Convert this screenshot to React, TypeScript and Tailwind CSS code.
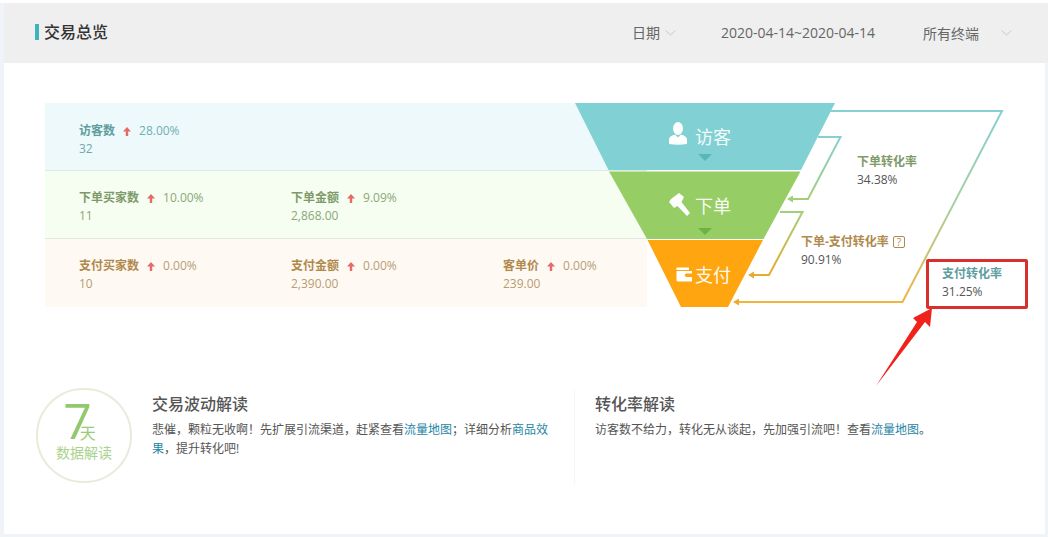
const font = { fontFamily: '"Open Sans","Noto Sans CJK SC",sans-serif' };

function UpArrow() {
  return (
    <svg width="8" height="9" viewBox="0 0 8 9" className="mx-2 shrink-0">
      <path d="M4 0 L8 4.5 L5.2 4.5 L5.2 9 L2.8 9 L2.8 4.5 L0 4.5 Z" fill="#e56a68" />
    </svg>
  );
}

function Chevron() {
  return (
    <svg width="11" height="6" viewBox="0 0 11 6" fill="none">
      <path d="M0.5 0.5 L5.5 5 L10.5 0.5" stroke="#c6c9c9" strokeWidth="1" />
    </svg>
  );
}

function Metric({ label, pct, value, labelCls, pctCls, valCls }: { label: string; pct: string; value: string; labelCls: string; pctCls: string; valCls: string }) {
  return (
    <div className="w-[212px] shrink-0">
      <div className="flex items-center h-[18px] text-xs">
        <span className={`font-bold ${labelCls}`}>{label}</span>
        <UpArrow />
        <span className={pctCls}>{pct}</span>
      </div>
      <div className={`h-[18px] leading-[18px] text-xs ${valCls}`}>{value}</div>
    </div>
  );
}

function Diagram() {
  return (
    <svg className="absolute left-0 top-0 overflow-visible" width="1003" height="290" viewBox="45 103 1003 290" fill="none">
      <defs>
        <linearGradient id="g1" gradientUnits="userSpaceOnUse" x1="0" y1="111" x2="0" y2="302">
          <stop offset="0" stopColor="#86d0d3" />
          <stop offset="0.5" stopColor="#a9d0a0" />
          <stop offset="1" stopColor="#f0b43f" />
        </linearGradient>
        <linearGradient id="g2" gradientUnits="userSpaceOnUse" x1="0" y1="137" x2="0" y2="199">
          <stop offset="0" stopColor="#86d0d3" />
          <stop offset="1" stopColor="#a3cf78" />
        </linearGradient>
        <linearGradient id="g3" gradientUnits="userSpaceOnUse" x1="0" y1="212" x2="0" y2="275">
          <stop offset="0" stopColor="#a3cf78" />
          <stop offset="1" stopColor="#eaaa30" />
        </linearGradient>
      </defs>
      <polygon points="575,103 835,103 801,170 608.5,170" fill="#81d0d3" />
      <polygon points="609,171.5 800.5,171.5 763.5,239 647,239" fill="#96cd64" />
      <polygon points="647.5,240 763,240 728,307 681,307" fill="#fea50f" />
      <polygon points="698,154 712,154 705,161" fill="#5cb6b9" />
      <polygon points="698,228 712,228 705,235" fill="#6fb04a" />
      <path d="M830 111 H1002 L902.5 302 H738" stroke="url(#g1)" strokeWidth="2" />
      <path d="M818 137 H840.5 L808 199 H792" stroke="url(#g2)" strokeWidth="2" />
      <path d="M780 212 H802.5 L769 275 H753" stroke="url(#g3)" strokeWidth="2" />
      <polygon points="733,302 739,298.5 739,305.5" fill="#eaaa30" />
      <polygon points="787,199 793,195.5 793,202.5" fill="#a3cf78" />
      <polygon points="748,275 754,271.5 754,278.5" fill="#eaaa30" />
      <g fill="#fdfefe">
        <ellipse cx="678" cy="128.5" rx="5" ry="6.5" />
        <path d="M669 144 V139.5 C669 137 672 135.5 675 134.5 L678 137.5 L681 134.5 C684 135.5 687 137 687 139.5 V144 Q678 145.5 669 144 Z" />
        <path d="M669 202 L671 199 L679 193 L684 197 L681.5 202 L690 213 L687 216 L677.5 206 L674 208 Z" />
        <path d="M676.5 267.5 H689 V270 H676.5 Z" />
        <path d="M676.5 271 H692 V273.5 H686 Q683.5 275 686 277 H692 V281.5 H678 Q676.5 281.5 676.5 280 Z" />
      </g>
      <polygon points="876,386 917,322 913,318 932,308 930,327 925,322" fill="#f0231c" />
    </svg>
  );
}

function Rate({ label, value, labelCls, q }: { label: string; value: string; labelCls: string; q?: boolean }) {
  return (
    <>
      <div className={`flex items-center h-[18px] text-xs font-bold ${labelCls}`}>
        {label}
        {q && <span className="ml-1 w-3 h-3 border border-[#b08a4c] rounded-[2px] text-[10px] leading-[10px] font-normal text-center">?</span>}
      </div>
      <div className="h-[18px] leading-[18px] text-xs text-[#555]">{value}</div>
    </>
  );
}

export default function App() {
  return (
    <div className="w-[1048px] h-[537px] overflow-hidden bg-[#f0f3f7] flex flex-col" style={font}>
      <div className="h-[3px] bg-white shrink-0" />
      <div className="ml-1 h-[60px] shrink-0 bg-[#efefef] flex items-center pl-[31px]">
        <div className="w-1 h-4 bg-[#3cb6bc] mr-[5px] mb-[2px]" />
        <div className="text-base font-medium text-[#333] mb-[2px]">交易总览</div>
        <div className="ml-auto flex items-center text-[#666] text-sm">
          <span>日期</span>
          <span className="ml-[5px] mr-[45px]"><Chevron /></span>
          <span className="mr-[48px]">2020-04-14~2020-04-14</span>
          <span className="pt-[1px]">所有终端</span>
          <span className="ml-[22px] mr-[36px]"><Chevron /></span>
        </div>
      </div>
      <div className="ml-1 mr-[3px] flex-1 bg-white flex flex-col">
        <div className="relative ml-[41px] mt-10 w-[1003px] h-[204px]">
          <div className="w-[602px] flex flex-col">
            <div className="h-[68px] bg-[#eef9fb] border-b border-[#dce9e7] pl-[34px] pt-[19px] flex">
              <Metric label="访客数" pct="28.00%" value="32" labelCls="text-[#5f9ea0]" pctCls="text-[#6fb0b5]" valCls="text-[#6fa8b0]" />
            </div>
            <div className="h-[68px] bg-[#f5fef0] border-b border-[#e2e8de] pl-[34px] pt-[18px] flex">
              <Metric label="下单买家数" pct="10.00%" value="11" labelCls="text-[#7f9a6a]" pctCls="text-[#8ca67a]" valCls="text-[#8ca67a]" />
              <Metric label="下单金额" pct="9.09%" value="2,868.00" labelCls="text-[#7f9a6a]" pctCls="text-[#8ca67a]" valCls="text-[#8ca67a]" />
            </div>
            <div className="h-[68px] bg-[#fff9f4] pl-[34px] pt-[18px] flex overflow-hidden">
              <Metric label="支付买家数" pct="0.00%" value="10" labelCls="text-[#b08a4c]" pctCls="text-[#b79c70]" valCls="text-[#b79c70]" />
              <Metric label="支付金额" pct="0.00%" value="2,390.00" labelCls="text-[#b08a4c]" pctCls="text-[#b79c70]" valCls="text-[#b79c70]" />
              <Metric label="客单价" pct="0.00%" value="239.00" labelCls="text-[#b08a4c]" pctCls="text-[#b79c70]" valCls="text-[#b79c70]" />
            </div>
          </div>
          <Diagram />
          <div className="absolute left-[650px] top-[22px] text-lg leading-6 text-[#f4fbfb]">访客</div>
          <div className="absolute left-[650px] top-[91px] text-lg leading-6 text-[#f8fcf4]">下单</div>
          <div className="absolute left-[650px] top-[160px] text-lg leading-6 text-[#fffaf0]">支付</div>
          <div className="absolute left-[812px] top-[50px]">
            <Rate label="下单转化率" value="34.38%" labelCls="text-[#7f9a6a]" />
          </div>
          <div className="absolute left-[756px] top-[130px]">
            <Rate label="下单-支付转化率" value="90.91%" labelCls="text-[#b08a4c]" q />
          </div>
          <div className="absolute left-[881px] top-[156px] w-[102px] h-[50px] bg-white border-[3px] border-[#d8302c] rounded-[2px] pl-[13px] pt-[3px]">
            <Rate label="支付转化率" value="31.25%" labelCls="text-[#5f9ea0]" />
          </div>
        </div>
        <div className="flex mt-[81px] ml-8">
          <div className="w-[96px] h-[95px] rounded-full border-[2px] border-[#e5edda] shrink-0 flex flex-col items-center">
            <div className="flex items-end h-[50px] mt-[5px] ml-[-9px]">
              <span className="text-[50px] leading-[50px] font-normal text-[#93c96e]">7</span>
              <span className="text-base leading-5 text-[#9ccc78] ml-[-12px] mb-[2px]">天</span>
            </div>
            <div className="text-sm leading-5 mt-[-2px] text-[#a9d38c]">数据解读</div>
          </div>
          <div className="w-[398px] ml-5 pt-[5px]">
            <div className="text-base leading-[22px] font-medium text-[#555]">交易波动解读</div>
            <div className="text-xs leading-[19px] text-[#555] mt-[5px]">
              悲催，颗粒无收啊！先扩展引流渠道，赶紧查看<span className="text-[#1f86a5]">流量地图</span>；详细分析<span className="text-[#1f86a5]">商品效果</span>，提升转化吧!
            </div>
          </div>
          <div className="ml-[24px] w-px h-[95px] mt-[2px] bg-[#f6f6f6]" />
          <div className="ml-5 pt-[5px]">
            <div className="text-base leading-[22px] font-medium text-[#555]">转化率解读</div>
            <div className="text-xs leading-[19px] text-[#555] mt-[5px]">
              访客数不给力，转化无从谈起，先加强引流吧！查看<span className="text-[#1f86a5]">流量地图</span>。
            </div>
          </div>
        </div>
      </div>
      <div className="h-[3px] shrink-0" />
    </div>
  );
}
